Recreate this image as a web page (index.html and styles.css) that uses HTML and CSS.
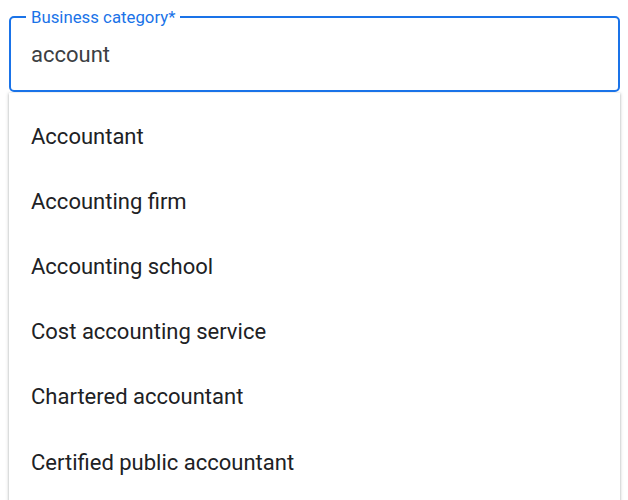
FILE: index.html
```html
<!DOCTYPE html>
<html lang="en">
<head>
<meta charset="utf-8">
<title>Business category</title>
<link rel="stylesheet" href="styles.css">
</head>
<body>
<div class="page">
  <div class="field">
    <span class="label">Business category*</span>
    <div class="value">account</div>
  </div>
  <ul class="menu">
    <li class="item">Accountant</li>
    <li class="item">Accounting firm</li>
    <li class="item">Accounting school</li>
    <li class="item">Cost accounting service</li>
    <li class="item">Chartered accountant</li>
    <li class="item">Certified public accountant</li>
  </ul>
</div>
</body>
</html>
```
FILE: styles.css
```css
html, body {
  margin: 0;
  padding: 0;
  background: #ffffff;
  overflow: hidden;
}
body {
  font-family: Roboto, "Liberation Sans", Arial, sans-serif;
  width: 628px;
  height: 500px;
}
.page {
  padding: 16px 8px 0 9px;
}
.field {
  position: relative;
  box-sizing: border-box;
  height: 76px;
  border: 2px solid #1a73e8;
  border-radius: 5px;
  padding: 24px 0 0 20px;
}
.label {
  position: absolute;
  top: -11px;
  left: 15px;
  padding: 0 5px;
  background: #ffffff;
  color: #1a73e8;
  font-size: 16.8px;
  line-height: 20px;
  white-space: nowrap;
}
.value {
  font-size: 22px;
  line-height: 26px;
  color: #3c4043;
}
.menu {
  list-style: none;
  margin: 1px 0 0 0;
  padding: 11px 0 0 0;
  background: #ffffff;
  box-shadow: 0 1px 3px 1px rgba(60, 64, 67, 0.15), 0 1px 2px rgba(60, 64, 67, 0.3);
  height: 420px;
  overflow: hidden;
}
.item {
  display: flex;
  align-items: center;
  height: 65.2px;
  padding-left: 22px;
  font-size: 22px;
  line-height: 26px;
  color: #202124;
}
```
